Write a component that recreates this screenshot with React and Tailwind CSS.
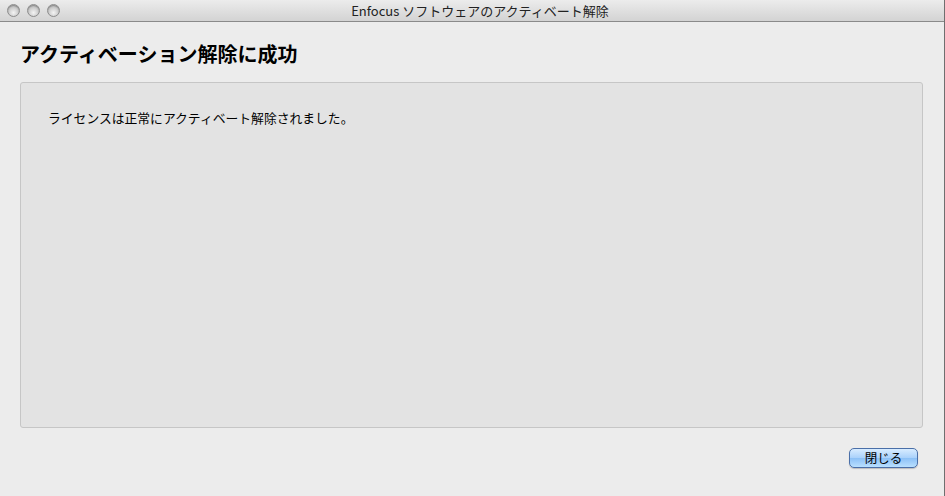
export default function App() {
  const jp = { fontFamily: '"Noto Sans CJK JP", "Noto Sans", sans-serif' };
  const Light = () => (
    <div className="w-[13px] h-[13px] rounded-full border border-[#8d8d8d] bg-[radial-gradient(circle_at_50%_70%,#f4f4f4_0%,#c9c9c9_55%,#a9a9a9_100%)] shadow-[inset_0_1px_1px_rgba(0,0,0,0.25)]" />
  );
  return (
    <div className="w-[945px] h-[496px] bg-[#ececec] flex flex-col overflow-hidden border-r border-[#6f6f6f]" style={jp}>
      <div className="h-[22px] shrink-0 relative flex items-center bg-[linear-gradient(#ececec,#d3d3d3)] border-b border-[#8a8a8a]">
        <div className="flex gap-[7px] pl-[7px]">
          <Light />
          <Light />
          <Light />
        </div>
        <div className="absolute inset-0 flex items-center justify-center text-[13px] text-[#222] pl-[16px] leading-none">
          Enfocus ソフトウェアのアクティベート解除
        </div>
      </div>
      <div className="flex-1 flex flex-col px-[20px] pr-[21px]">
        <div className="h-[60px] flex items-center text-[20px] font-bold text-black pt-[3px]">
          アクティベーション解除に成功
        </div>
        <div className="h-[346px] bg-[#e3e3e3] border border-[#c6c6c6] rounded-[3px] pl-[27px] pt-[25px] text-[12.8px] text-black">
          ライセンスは正常にアクティベート解除されました。
        </div>
        <div className="flex justify-end pt-[20px] pr-[5px]">
          <button className="w-[69px] h-[20px] rounded-[5px] border border-[#4a6fa8] bg-[linear-gradient(#d8ecff_0%,#a9d1fb_50%,#8cc0f6_51%,#b9e0ff_100%)] text-[12.5px] text-black flex items-center justify-center shadow-[0_1px_1px_rgba(0,0,0,0.2)]">
            閉じる
          </button>
        </div>
      </div>
    </div>
  );
}
